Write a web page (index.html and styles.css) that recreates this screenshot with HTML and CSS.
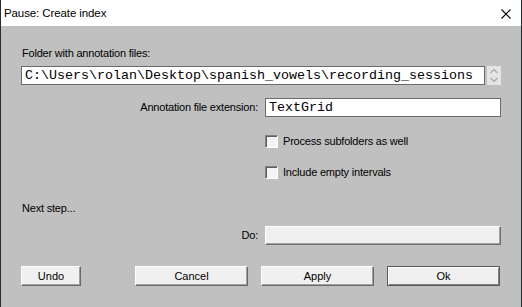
FILE: index.html
```html
<!DOCTYPE html>
<html lang="en">
<head>
  <meta charset="UTF-8">
  <title>Pause: Create index</title>
  <link rel="stylesheet" href="styles.css">
</head>
<body>
  <div class="window">
    <!-- Barra de titulo -->
    <div class="titlebar">
      <span class="title">Pause: Create index</span>
      <svg class="close" width="10" height="10" viewBox="0 0 10 10">
        <path d="M0.5 0.5 L9.5 9.5 M9.5 0.5 L0.5 9.5" stroke="#000" stroke-width="1.1" fill="none"/>
      </svg>
    </div>

    <div class="client">
      <div class="label folder-label">Folder with annotation files:</div>
      <div class="folder-row">
        <div class="field">C:\Users\rolan\Desktop\spanish_vowels\recording_sessions</div>
        <div class="spinner">
          <svg width="14" height="19" viewBox="0 0 14 19">
            <path d="M3.5 7 L7 3.5 L10.5 7 M3.5 12 L7 15.5 L10.5 12" stroke="#a8a8a8" stroke-width="1.2" fill="none"/>
          </svg>
        </div>
      </div>

      <div class="form-row ext-row">
        <div class="label row-label">Annotation file extension:</div>
        <div class="field">TextGrid</div>
      </div>

      <div class="form-row check-row first">
        <div></div>
        <label class="check"><span class="box"></span><span class="label">Process subfolders as well</span></label>
      </div>
      <div class="form-row check-row">
        <div></div>
        <label class="check"><span class="box"></span><span class="label">Include empty intervals</span></label>
      </div>

      <div class="label next-label">Next step...</div>
      <div class="form-row do-row">
        <div class="label row-label">Do:</div>
        <div class="do-field"></div>
      </div>

      <div class="buttons">
        <button class="btn undo">Undo</button>
        <div class="btn-group">
          <button class="btn">Cancel</button>
          <button class="btn">Apply</button>
          <button class="btn default">Ok</button>
        </div>
      </div>
    </div>
  </div>
</body>
</html>
```

FILE: styles.css
```css
/* Base */
* {
  margin: 0;
  padding: 0;
  box-sizing: border-box;
}
html, body {
  width: 522px;
  height: 307px;
  overflow: hidden;
  background: #c0c0c0;
}

/* Janela */
.window {
  width: 522px;
  height: 307px;
  background: #c0c0c0;
  border-left: 1px solid #262b36;
  border-right: 1px solid #262b36;
  font-family: "Liberation Sans", Arial, sans-serif;
  color: #000;
}

.titlebar {
  height: 26px;
  background: #fff;
  display: flex;
  align-items: center;
  justify-content: space-between;
  padding: 0 10px 0 3px;
}
.title {
  font-size: 11.5px;
  letter-spacing: -0.1px;
}
.close {
  display: block;
  margin-top: 1px;
}

/* Area cliente */
.client {
  padding: 0 20px;
}

.label {
  font-size: 11px;
  letter-spacing: -0.2px;
  line-height: 13px;
  white-space: nowrap;
}

.folder-label {
  margin-top: 21px;
  padding-left: 1px;
}

.folder-row {
  display: flex;
  gap: 2px;
  margin-top: 6px;
  height: 19px;
}
.folder-row .field {
  flex: 1;
}

.field {
  height: 19px;
  background: #fff;
  border: 1px solid #6a6a6a;
  font-family: "Liberation Mono", "Courier New", monospace;
  font-size: 13.33px;
  line-height: 17px;
  padding-left: 3px;
  white-space: nowrap;
  overflow: hidden;
}

.spinner {
  width: 14px;
  height: 19px;
  background: #e4e4e4;
}
.spinner svg {
  display: block;
}

.form-row {
  display: grid;
  grid-template-columns: 244px 1fr;
  align-items: center;
}
.row-label {
  text-align: right;
  padding-right: 7px;
}

.ext-row {
  margin-top: 13px;
}

.check-row {
  height: 13px;
}
.check-row.first {
  margin-top: 18px;
}
.check-row + .check-row {
  margin-top: 18px;
}
.check {
  display: flex;
  align-items: center;
  gap: 5px;
}
.box {
  width: 13px;
  height: 13px;
  background: #f4f4f4;
  border-top: 1px solid #808080;
  border-left: 1px solid #808080;
  border-right: 1px solid #fff;
  border-bottom: 1px solid #fff;
  box-shadow: inset 1px 1px 0 #606060;
}

.next-label {
  margin-top: 23px;
  padding-left: 1px;
}

.do-row {
  margin-top: 11px;
}
.do-field {
  height: 19px;
  background: #f0f0f0;
  border-top: 1px solid #fff;
  border-left: 1px solid #fff;
  border-right: 1px solid #707070;
  border-bottom: 1px solid #707070;
  box-shadow: inset -1px -1px 0 #a0a0a0;
}

/* Botoes */
.buttons {
  display: flex;
  justify-content: space-between;
  margin-top: 21px;
  padding-right: 1px;
}
.btn-group {
  display: flex;
  gap: 13px;
}
.btn {
  width: 113px;
  height: 20px;
  background: #f0f0f0;
  border-top: 1px solid #fff;
  border-left: 1px solid #fff;
  border-right: 1px solid #696969;
  border-bottom: 1px solid #696969;
  box-shadow: inset -1px -1px 0 #a0a0a0;
  font-family: "Liberation Sans", Arial, sans-serif;
  font-size: 11px;
  color: #000;
  padding-bottom: 1px;
}
.btn.undo {
  width: 60px;
}
.btn.default {
  border: 1px solid #5a5a5a;
  box-shadow: inset 1px 1px 0 #fff, inset -1px -1px 0 #808080;
}
```
